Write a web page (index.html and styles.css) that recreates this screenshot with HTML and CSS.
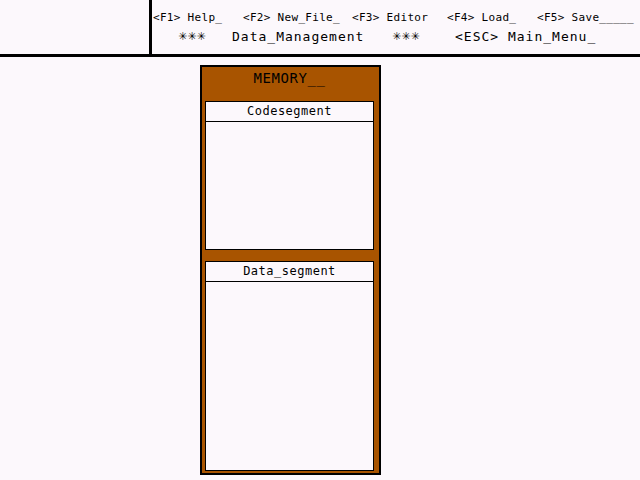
FILE: index.html
```html
<!DOCTYPE html>
<html>
<head>
<meta charset="utf-8">
<link rel="stylesheet" href="styles.css">
</head>
<body>
<header class="topbar">
  <div class="blank"></div>
  <div class="menu">
    <div class="keys">
      <span>&lt;F1&gt; Help_</span>
      <span>&lt;F2&gt; New_File_</span>
      <span>&lt;F3&gt; Editor</span>
      <span>&lt;F4&gt; Load_</span>
      <span>&lt;F5&gt; Save_____</span>
    </div>
    <div class="title">
      <span class="stars">&#x2733;&#x2733;&#x2733;</span>
      <span>Data_Management</span>
      <span class="stars">&#x2733;&#x2733;&#x2733;</span>
      <span>&lt;ESC&gt; Main_Menu_</span>
    </div>
  </div>
</header>
<main class="memory">
  <div class="mem-title">MEMORY__</div>
  <section class="panel code">
    <div class="panel-head">Codesegment</div>
  </section>
  <section class="panel data">
    <div class="panel-head">Data_segment</div>
  </section>
</main>
</body>
</html>
```

FILE: styles.css
```css
html, body {
  margin: 0;
  padding: 0;
  background: #fcf8fc;
  color: #000;
  font-family: "DejaVu Sans Mono", "Liberation Mono", monospace;
}
.topbar {
  display: flex;
  height: 54px;
  border-bottom: 3px solid #000;
}
.blank {
  width: 149px;
  border-right: 3px solid #000;
}
.menu {
  flex: 1;
  padding-left: 1px;
}
.keys {
  display: grid;
  grid-template-columns: 90px 109px 95px 90px auto;
  font-size: 11px;
  letter-spacing: 0.3px;
  line-height: 14px;
  padding-top: 11px;
  white-space: pre;
}
.title {
  display: grid;
  grid-template-columns: 54px 160px 63px auto;
  margin-top: 3px;
  padding-left: 25px;
  font-size: 13px;
  letter-spacing: 1px;
  line-height: 18px;
  white-space: pre;
}
.stars {
  font-family: "DejaVu Sans", sans-serif;
  font-size: 11px;
  letter-spacing: 0;
}
.memory {
  display: flex;
  flex-direction: column;
  margin: 8px 0 0 200px;
  width: 169px;
  height: 406px;
  border: 2px solid #000;
  background: #a85400;
  padding: 0 5px 0 3px;
}
.mem-title {
  height: 31px;
  padding-top: 3px;
  line-height: 16px;
  font-size: 14px;
  letter-spacing: 0.6px;
  text-align: center;
}
.panel {
  background: #fcf8fc;
  border: 1px solid #000;
}
.code {
  height: 147px;
}
.data {
  height: 208px;
  margin-top: 11px;
}
.panel-head {
  height: 19px;
  line-height: 19px;
  font-size: 12px;
  letter-spacing: 0.5px;
  text-align: center;
  border-bottom: 1px solid #000;
}
```
